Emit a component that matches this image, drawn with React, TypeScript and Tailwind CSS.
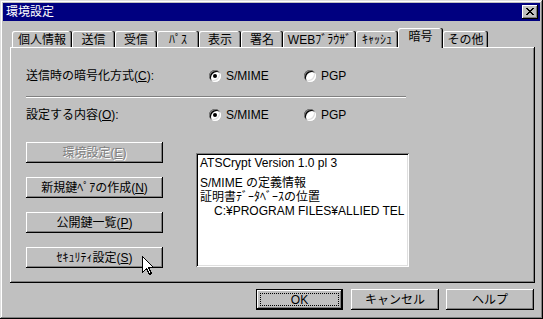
import type { ReactNode } from 'react';

const raised = 'shadow-[inset_-1px_-1px_#000,inset_1px_1px_#fff,inset_-2px_-2px_#808080]';

const Btn = ({ children, w, disabled, def }: { children: ReactNode; w: string; disabled?: boolean; def?: boolean }) => (
  <div
    className={`${w} h-[21px] flex items-stretch bg-[#c0c0c0] ${
      def
        ? 'shadow-[inset_1px_1px_#000,inset_-1px_-1px_#000,inset_-2px_-2px_#000,inset_2px_2px_#fff,inset_-3px_-3px_#808080]'
        : raised
    }`}
  >
    {def ? (
      <div className="flex-1 m-[4px] border border-dotted border-black flex items-center justify-center leading-none">{children}</div>
    ) : (
      <div
        className={`flex-1 flex items-center justify-center leading-none ${
          disabled ? 'text-[#808080] [text-shadow:1px_1px_0_#fff]' : ''
        }`}
      >
        {children}
      </div>
    )}
  </div>
);

const Radio = ({ checked, label }: { checked?: boolean; label: string }) => (
  <div className="flex items-center">
    <div className="w-[12px] h-[12px] rounded-full bg-white shadow-[inset_1px_1px_#808080,inset_-1px_-1px_#fff,inset_2px_2px_#000,inset_-2px_-2px_#dfdfdf] flex items-center justify-center">
      {checked && <div className="w-[4px] h-[4px] rounded-full bg-black" />}
    </div>
    <span className="ml-[5px] leading-none">{label}</span>
  </div>
);

const tabs = [
  { label: '個人情報', w: 'w-[60px]' },
  { label: '送信', w: 'w-[43px]' },
  { label: '受信', w: 'w-[42px]' },
  { label: 'ﾊﾟｽ', w: 'w-[42px]' },
  { label: '表示', w: 'w-[42px]' },
  { label: '署名', w: 'w-[42px]' },
  { label: 'WEBﾌﾞﾗｳｻﾞ', w: 'w-[73px]' },
  { label: 'ｷｬｯｼｭ', w: 'w-[42px]' },
  { label: '暗号', w: 'w-[45px]', active: true },
  { label: 'その他', w: 'w-[45px]' },
];

const App = () => {
  return (
    <div className="relative w-[543px] h-[319px] bg-[#c0c0c0] p-[3px] flex flex-col text-[12px] text-black font-[family-name:'Liberation_Sans','Noto_Sans_CJK_JP',sans-serif] shadow-[inset_-1px_-1px_#000,inset_1px_1px_#dfdfdf,inset_-2px_-2px_#808080,inset_2px_2px_#fff]">
      {/* title bar */}
      <div className="h-[18px] bg-[#000080] flex items-center pl-[3px] text-white">
        <span className="leading-none">環境設定</span>
        <div className={`ml-auto mr-[2px] w-[16px] h-[14px] bg-[#c0c0c0] flex items-center justify-center ${raised}`}>
          <svg width="8" height="7" viewBox="0 0 8 7" shapeRendering="crispEdges" className="-mt-px">
            <path d="M0 0h2v1H0zM6 0h2v1H6zM1 1h2v1H1zM5 1h2v1H5zM2 2h4v1H2zM3 3h2v1H3zM2 4h4v1H2zM1 5h2v1H1zM5 5h2v1H5zM0 6h2v1H0zM6 6h2v1H6z" fill="#000" />
          </svg>
        </div>
      </div>

      <div className="flex flex-col pl-[7px] pr-[5px] pt-[7px]">
        {/* tabs */}
        <div className="flex items-end h-[19px] pl-[2px]">
          {tabs.map((t) => (
            <div
              key={t.label}
              className={`${t.w} flex items-center justify-center bg-[#c0c0c0] rounded-t-[2px] shadow-[inset_-1px_0_#000,inset_-2px_0_#808080,inset_1px_1px_#fff] ${
                t.active ? 'relative z-10 h-[20px] -mb-px pb-[3px]' : 'h-[16px] pt-px'
              }`}
            >
              <span className="leading-none whitespace-nowrap">{t.label}</span>
            </div>
          ))}
        </div>

        {/* panel */}
        <div className={`h-[236px] flex flex-col pl-[16px] ${raised}`}>
          <div className="mt-[19px] h-[20px] flex items-center">
            <div className="w-[183px] leading-none">
              送信時の暗号化方式(<u>C</u>):
            </div>
            <div className="w-[95px]">
              <Radio checked label="S/MIME" />
            </div>
            <Radio label="PGP" />
          </div>

          <div className="mt-[10px] w-[380px] h-0 border-t border-b border-t-[#808080] border-b-white" />

          <div className="mt-[7px] h-[20px] flex items-center">
            <div className="w-[183px] leading-none">
              設定する内容(<u>O</u>):
            </div>
            <div className="w-[95px]">
              <Radio checked label="S/MIME" />
            </div>
            <Radio label="PGP" />
          </div>

          <div className="mt-[17px] flex items-start">
            <div className="flex flex-col gap-[14px]">
              <Btn w="w-[137px]" disabled>
                環境設定(<u>E</u>)
              </Btn>
              <Btn w="w-[137px]">
                新規鍵ﾍﾟｱの作成(<u>N</u>)
              </Btn>
              <Btn w="w-[137px]">
                公開鍵一覧(<u>P</u>)
              </Btn>
              <Btn w="w-[137px]">
                ｾｷｭﾘﾃｨ設定(<u>S</u>)
              </Btn>
            </div>

            <div className="ml-[33px] mt-[11px] w-[213px] h-[114px] bg-white overflow-hidden shadow-[inset_1px_1px_#808080,inset_-1px_-1px_#fff,inset_2px_2px_#000,inset_-2px_-2px_#dfdfdf] pt-[3px] pl-[4px] pr-[2px] leading-[14px] whitespace-nowrap">
              <div>ATSCrypt Version 1.0 pl 3</div>
              <div className="h-[6px]" />
              <div>S/MIME の定義情報</div>
              <div>証明書ﾃﾞｰﾀﾍﾞｰｽの位置</div>
              <div className="pl-[14px]">C:¥PROGRAM FILES¥ALLIED TEL</div>
            </div>
          </div>
        </div>

        {/* bottom buttons */}
        <div className="mt-[6px] mr-px flex justify-end">
          <Btn w="w-[87px]" def>
            OK
          </Btn>
          <div className="ml-[8px]">
            <Btn w="w-[88px]">キャンセル</Btn>
          </div>
          <div className="ml-[7px]">
            <Btn w="w-[88px]">ヘルプ</Btn>
          </div>
        </div>
      </div>

      {/* mouse pointer */}
      <svg className="absolute left-[142px] top-[256px]" width="13" height="20" viewBox="0 0 13 20" shapeRendering="crispEdges">
        <path d="M0.5 0.5V16.5L4.5 12.5L7.5 18.5L9.5 17.5L6.5 11.5H11.5Z" fill="#fff" stroke="#000" strokeWidth="1" strokeLinejoin="miter" />
      </svg>
    </div>
  );
};

export default App;
